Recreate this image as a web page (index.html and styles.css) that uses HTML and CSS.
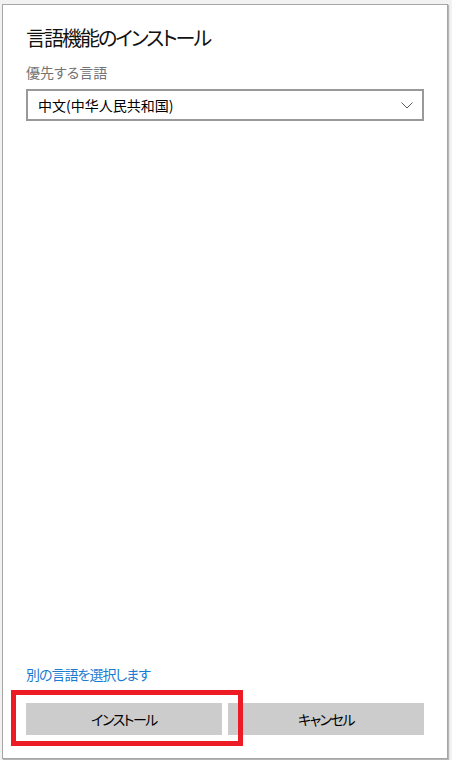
FILE: index.html
```html
<!DOCTYPE html>
<html lang="ja">
<head>
<meta charset="utf-8">
<title>言語機能のインストール</title>
<link rel="stylesheet" href="styles.css">
</head>
<body>
<div class="panel">
  <h1 class="title">言語機能のインストール</h1>
  <div class="label">優先する言語</div>
  <div class="select">
    <span class="select-text">中文(中华人民共和国)</span>
    <svg class="chev" width="12" height="7" viewBox="0 0 12 7"><path d="M0.5 0.5 L6 6 L11.5 0.5" fill="none" stroke="#5a5a5a" stroke-width="1"/></svg>
  </div>
  <div class="spacer"></div>
  <a class="link" href="#">別の言語を選択します</a>
  <div class="buttons">
    <button class="btn">インストール</button>
    <button class="btn">キャンセル</button>
  </div>
</div>
<div class="highlight"></div>
</body>
</html>
```
FILE: styles.css
```css
html, body {
  margin: 0;
  padding: 0;
}
body {
  background: #f2f2f2;
  width: 452px;
  height: 760px;
  overflow: hidden;
  position: relative;
  font-family: "Noto Sans CJK JP", "Noto Sans", sans-serif;
  font-feature-settings: "palt";
}
.panel {
  box-sizing: border-box;
  margin: 4px 0 0 2px;
  width: 446px;
  height: 755px;
  background: #fff;
  border: 1px solid #a6a6a6;
  box-shadow: 1px 1px 1px rgba(0,0,0,0.25);
  padding: 19px 23px 23px 23px;
  display: flex;
  flex-direction: column;
}
.title {
  margin: 0;
  font-size: 20px;
  line-height: 28px;
  font-weight: 400;
  letter-spacing: -2px;
  color: #111;
}
.label {
  margin-top: 10px;
  font-size: 14px;
  line-height: 20px;
  color: #737373;
}
.select {
  margin-top: 7px;
  box-sizing: border-box;
  height: 32px;
  border: 2px solid #999;
  display: flex;
  align-items: center;
  justify-content: space-between;
  padding: 0 9px 0 10px;
}
.select-text {
  font-size: 14px;
  color: #000;
  font-feature-settings: normal;
}
.chev {
  display: block;
}
.spacer {
  flex: 1;
}
.link {
  font-size: 14px;
  line-height: 20px;
  letter-spacing: -1px;
  color: #1a7bd2;
  text-decoration: none;
}
.buttons {
  margin-top: 19px;
  display: grid;
  grid-template-columns: 1fr 1fr;
  gap: 6px;
}
.btn {
  height: 32px;
  border: none;
  background: #cccccc;
  font-family: inherit;
  font-feature-settings: "palt";
  font-size: 14px;
  letter-spacing: -1.5px;
  color: #000;
  padding: 0;
}
.highlight {
  position: absolute;
  left: 11px;
  top: 690px;
  width: 232px;
  height: 56px;
  box-sizing: border-box;
  border: 5px solid #ed1c24;
}
```
